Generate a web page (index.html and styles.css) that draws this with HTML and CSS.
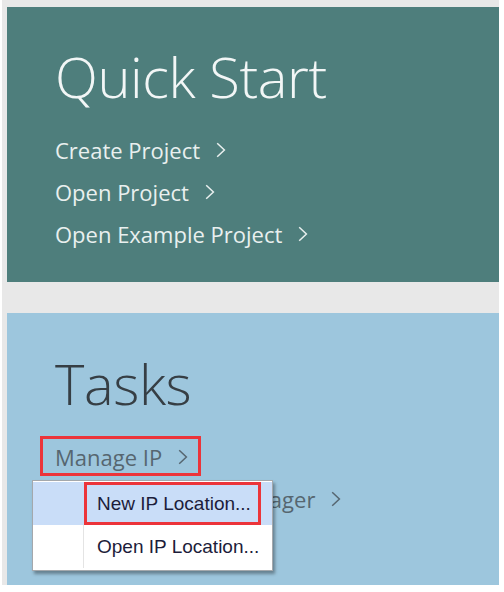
FILE: index.html
```html
<!DOCTYPE html>
<html>
<head>
<meta charset="utf-8">
<link rel="stylesheet" href="styles.css">
</head>
<body>
<div class="frame">
  <section class="panel quick">
    <h1 class="title">Quick Start</h1>
    <ul class="links">
      <li class="link">Create Project <svg class="chev" viewBox="0 0 10 16"><polyline points="1.2,1.2 8.4,8 1.2,14.8"/></svg></li>
      <li class="link">Open Project <svg class="chev" viewBox="0 0 10 16"><polyline points="1.2,1.2 8.4,8 1.2,14.8"/></svg></li>
      <li class="link">Open Example Project <svg class="chev" viewBox="0 0 10 16"><polyline points="1.2,1.2 8.4,8 1.2,14.8"/></svg></li>
    </ul>
  </section>
  <section class="panel tasks">
    <h1 class="title">Tasks</h1>
    <ul class="links">
      <li class="link"><span class="marked">Manage IP <svg class="chev" viewBox="0 0 10 16"><polyline points="1.2,1.2 8.4,8 1.2,14.8"/></svg></span></li>
      <li class="link">Open Hardware Manager <svg class="chev" viewBox="0 0 10 16"><polyline points="1.2,1.2 8.4,8 1.2,14.8"/></svg></li>
    </ul>
    <div class="menu">
      <div class="item active"><span class="gutter"></span><span class="label marked-item">New IP Location...</span></div>
      <div class="item"><span class="gutter"></span><span class="label">Open IP Location...</span></div>
    </div>
  </section>
</div>
</body>
</html>
```
FILE: styles.css
```css
html, body {
  margin: 0;
  padding: 0;
  background: #ffffff;
}
.frame {
  margin-left: 2px;
  width: 497px;
  height: 585px;
  box-sizing: border-box;
  padding: 7px 0 0 5px;
  background: #e8e8e8;
  display: flex;
  flex-direction: column;
  gap: 31px;
}
.panel {
  position: relative;
  box-sizing: border-box;
  padding-left: 48px;
  font-family: "Open Sans", "DejaVu Sans", sans-serif;
}
.quick {
  height: 275px;
  padding-top: 41px;
  background: #4e7e7c;
  color: #e9f0ef;
}
.tasks {
  height: 272px;
  padding-top: 42px;
  background: #9dc6dd;
  color: #566670;
}
.title {
  margin: 0;
  font-size: 56px;
  line-height: 56px;
  font-weight: 300;
  letter-spacing: -0.4px;
}
.quick .title { color: #f2f6f6; }
.tasks .title { color: #363e44; }
.links {
  list-style: none;
  margin: 25px 0 0 0;
  padding: 0;
}
.link {
  font-size: 22px;
  line-height: 42px;
  height: 42px;
  display: flex;
  align-items: center;
}
.chev {
  flex-shrink: 0;
  width: 10px;
  height: 16px;
  margin-left: 16px;
  fill: none;
  stroke: currentColor;
  stroke-width: 1.5;
}
.marked {
  position: relative;
  display: inline-flex;
  align-items: center;
}
.marked::after {
  content: "";
  position: absolute;
  left: -15px;
  right: -13px;
  top: 0;
  bottom: 2px;
  border: 3px solid #ec343a;
}
.menu {
  position: absolute;
  left: 25px;
  top: 167px;
  width: 241px;
  box-sizing: border-box;
  border: 1px solid #a4a8ac;
  background: #ffffff;
  box-shadow: 2px 3px 3px rgba(0, 0, 0, 0.35);
  padding: 1px 0 2px 0;
  font-family: "Liberation Sans", Arial, sans-serif;
  font-size: 19px;
  color: #1c1c3a;
}
.item {
  display: flex;
  height: 43px;
  align-items: stretch;
}
.gutter {
  width: 50px;
  border-right: 1px solid #e4e4e4;
}
.item.active {
  background: #c9ddf8;
}
.item.active .gutter {
  border-right-color: transparent;
}
.label {
  position: relative;
  display: flex;
  align-items: center;
  padding-left: 13px;
}
.marked-item::after {
  content: "";
  position: absolute;
  left: 0;
  top: 0;
  bottom: 0;
  width: 177px;
  box-sizing: border-box;
  border: 3px solid #ec343a;
}
```
